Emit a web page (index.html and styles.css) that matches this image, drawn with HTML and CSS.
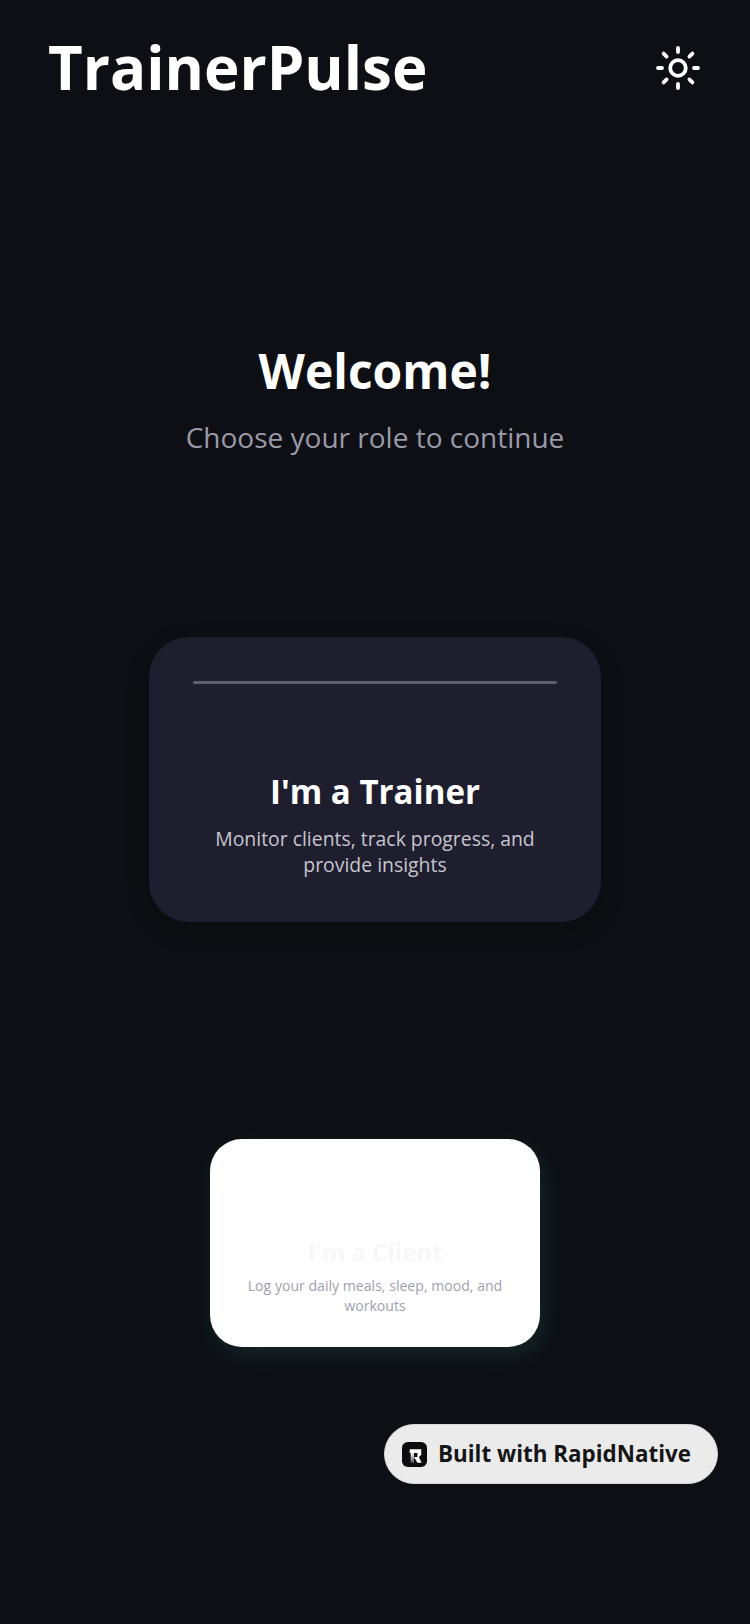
FILE: index.html
```html
<!DOCTYPE html>
<html lang="en">
<head>
<meta charset="utf-8">
<title>TrainerPulse</title>
<link rel="stylesheet" href="styles.css">
</head>
<body>
<div class="screen">
  <header class="header">
    <h1 class="brand">TrainerPulse</h1>
    <svg class="sun" viewBox="0 0 44 44" fill="none" stroke="#fff" stroke-linecap="round">
      <circle cx="22" cy="22" r="7.8" stroke-width="3.8"/>
      <path d="M22 2V6M22 38V42M2 22H6M38 22H42M7.6 7.6L10.6 10.6M33.4 33.4L36.4 36.4M7.6 36.4L10.6 33.4M33.4 10.6L36.4 7.6" stroke-width="3.8"/>
    </svg>
  </header>
  <section class="welcome">
    <h2 class="welcome-title">Welcome!</h2>
    <p class="welcome-sub">Choose your role to continue</p>
  </section>
  <section class="card card-trainer">
    <div class="card-rule"></div>
    <h3 class="trainer-title">I'm a Trainer</h3>
    <p class="trainer-text">Monitor clients, track progress, and provide insights</p>
  </section>
  <section class="card card-client">
    <h3 class="client-title">I'm a Client</h3>
    <p class="client-text">Log your daily meals, sleep, mood, and workouts</p>
  </section>
  <div class="badge">
    <svg class="badge-logo" viewBox="0 0 26 26">
      <defs>
        <linearGradient id="stem" x1="0" y1="0" x2="0" y2="1">
          <stop offset="0" stop-color="#fff"/>
          <stop offset="1" stop-color="#555"/>
        </linearGradient>
      </defs>
      <rect width="26" height="26" rx="6" fill="#0d0d0f"/>
      <path d="M8 7.5H20V13.5L17.5 15.5L20.5 21.5H16L12.5 15.5H16V11.5H8Z" fill="#fff"/>
      <path d="M9 11.5H12.5V21.5H9Z" fill="url(#stem)"/>
    </svg>
    <span class="badge-text">Built with RapidNative</span>
  </div>
</div>
</body>
</html>
```
FILE: styles.css
```css
* { box-sizing: border-box; margin: 0; padding: 0; }
html, body { width: 750px; height: 1624px; overflow: hidden; }
body { background: #0d0f14; font-family: "Open Sans", sans-serif; color: #fff; }
.screen { display: flex; flex-direction: column; align-items: center; height: 1624px; position: relative; }
.header { width: 100%; height: 136px; padding: 0 50px 0 48px; display: flex; justify-content: space-between; align-items: center; }
.brand { font-size: 60px; line-height: 132px; font-weight: 700; letter-spacing: 0; margin-bottom: 2px; }
.sun { width: 44px; height: 44px; }
.welcome { margin-top: 205px; display: flex; flex-direction: column; align-items: center; }
.welcome-title { font-size: 48px; line-height: 60px; font-weight: 700; }
.welcome-sub { margin-top: 18px; font-size: 28px; line-height: 36px; color: #9a9aa8; }
.card { display: flex; flex-direction: column; align-items: center; text-align: center; }
.card-trainer { margin-top: 182px; width: 452px; height: 285px; padding: 44px 44px 0; background: #1e1e2e; border-radius: 40px; box-shadow: 0 8px 24px rgba(0,0,0,.2); }
.card-rule { width: 100%; height: 3px; border-radius: 2px; background: #5f5f70; }
.trainer-title { margin-top: 86px; font-size: 33.1px; line-height: 44px; font-weight: 700; }
.trainer-text { margin-top: 12px; font-size: 19.4px; line-height: 26px; color: #c6c6cf; width: 340px; }
.card-client { margin-top: 217px; width: 330px; height: 208px; padding: 0 20px; background: #fff; border-radius: 32px; box-shadow: 4px 8px 24px rgba(78,205,196,.12); }
.client-title { margin-top: 97px; font-size: 24px; line-height: 32px; font-weight: 700; color: #f7f7f8; }
.client-text { margin-top: 8px; font-size: 14.1px; line-height: 20px; color: #a0a0b0; width: 270px; }
.badge { position: absolute; left: 384px; top: 1424px; width: 334px; height: 60px; border-radius: 30px; background: #ebebeb; border: 1px solid #d8d8d8; display: flex; align-items: center; gap: 11px; padding-left: 17px; }
.badge-logo { width: 25px; height: 25px; flex: none; }
.badge-text { font-size: 22.4px; line-height: 30px; font-weight: 700; color: #151515; white-space: nowrap; }
```
